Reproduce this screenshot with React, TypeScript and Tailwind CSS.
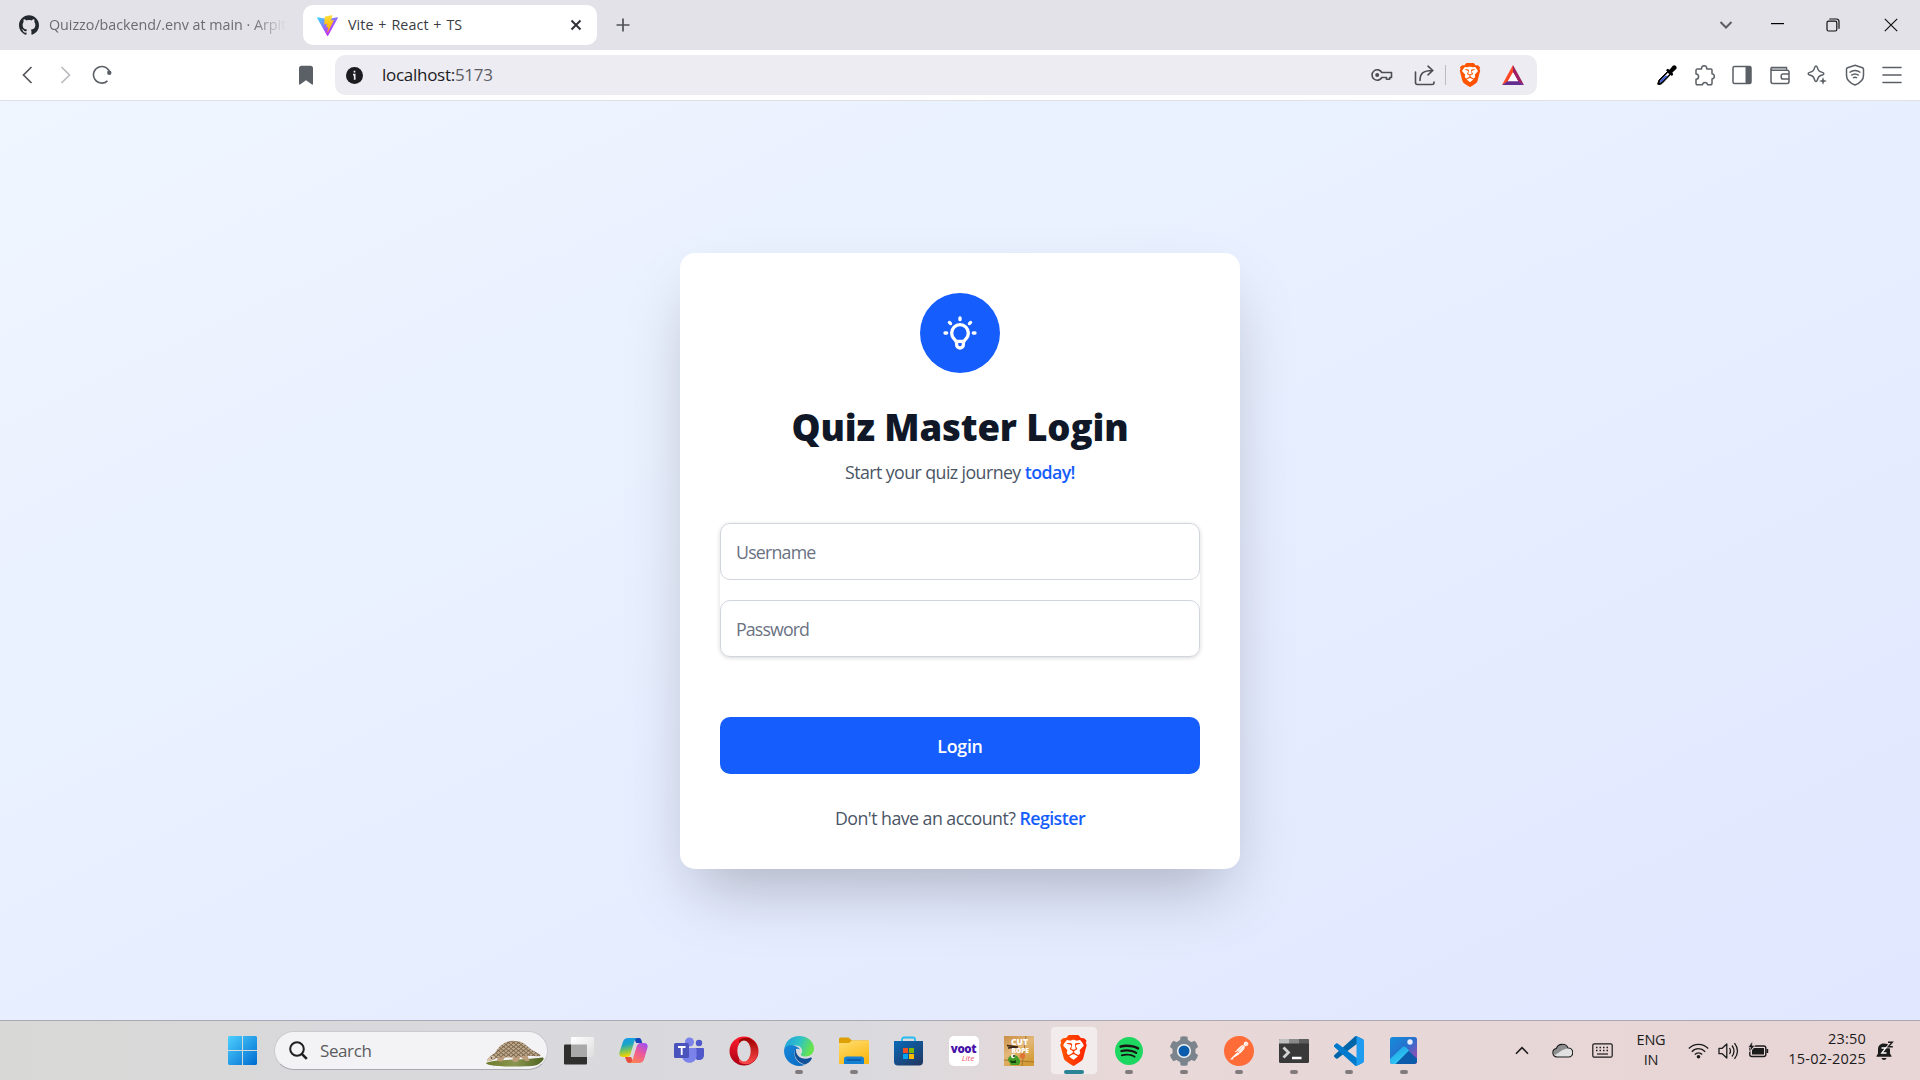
import type { ReactNode } from "react";
import { SiBrave, SiGithub, SiPostman, SiSpotify } from "react-icons/si";
import { HiOutlineLightBulb } from "react-icons/hi";

function ViteLogo() {
  return (
    <svg width="21" height="21" viewBox="0 0 256 257">
      <defs>
        <linearGradient id="va" x1="0" x2=".58" y1=".08" y2=".79"><stop offset="0" stopColor="#41D1FF" /><stop offset="1" stopColor="#BD34FE" /></linearGradient>
        <linearGradient id="vb" x1=".43" x2=".5" y1=".02" y2=".89"><stop offset="0" stopColor="#FFEA83" /><stop offset=".08" stopColor="#FFDD35" /><stop offset="1" stopColor="#FFA800" /></linearGradient>
      </defs>
      <path fill="url(#va)" d="M255.153 37.938 134.897 252.976c-2.483 4.44-8.862 4.466-11.382.048L.875 37.958c-2.746-4.814 1.371-10.646 6.827-9.67l120.385 21.517a6.54 6.54 0 0 0 2.322-.004l117.867-21.483c5.438-.991 9.574 4.796 6.877 9.62Z" />
      <path fill="url(#vb)" d="M185.432.063 96.44 17.501a3.268 3.268 0 0 0-2.634 3.014l-5.474 92.456a3.268 3.268 0 0 0 3.997 3.378l24.777-5.718c2.318-.535 4.413 1.507 3.936 3.838l-7.361 36.047c-.495 2.426 1.782 4.5 4.151 3.78l15.304-4.649c2.372-.72 4.652 1.36 4.15 3.788l-11.698 56.621c-.732 3.542 3.979 5.473 5.943 2.437l1.313-2.028 72.516-144.72c1.215-2.423-.88-5.186-3.54-4.672l-25.505 4.922c-2.396.462-4.435-1.77-3.759-4.114l16.646-57.705c.677-2.35-1.37-4.583-3.769-4.113Z" />
    </svg>
  );
}

function TabStrip() {
  return (
    <div className="flex h-[50px] shrink-0 items-center bg-[#e3e2e8] text-[14.3px]">
      <div className="ml-[19px] flex w-[284px] items-center">
        <SiGithub size={20} color="#24292f" className="shrink-0" />
        <div className="ml-[10px] w-[237px] overflow-hidden whitespace-nowrap tracking-[-0.02px] text-[#6b6c72] [mask-image:linear-gradient(to_right,black_86%,transparent)]">
          Quizzo/backend/.env at main · Arpit
        </div>
      </div>
      <div className="flex h-10 w-[294px] items-center rounded-[10px] bg-white pl-[14px] pr-[15px] text-[#3b3c43]">
        <ViteLogo />
        <span className="ml-[10px] tracking-[0.080px] [word-spacing:1px]">Vite + React + TS</span>
        <svg className="ml-auto" width="12" height="12" viewBox="0 0 12 12" stroke="#303136" strokeWidth="2"><path d="M1.5 1.5l9 9M10.5 1.5l-9 9" /></svg>
      </div>
      <svg className="ml-[19px]" width="14" height="14" viewBox="0 0 14 14" stroke="#505157" strokeWidth="1.7"><path d="M7 .5v13M.5 7h13" /></svg>
      <div className="ml-auto flex items-center pr-[22px]">
        <svg width="14" height="10" viewBox="0 0 14 10" fill="none" stroke="#5c5d64" strokeWidth="2"><path d="M1.5 2l5.5 5.500L12.500 2" /></svg>
        <svg className="ml-[38px]" width="13" height="14" viewBox="0 0 13 14" stroke="#000" strokeWidth="1.2"><path d="M0 5.600h13" /></svg>
        <svg className="ml-[42px]" width="14" height="14" viewBox="0 0 14 14" fill="none" stroke="#111" strokeWidth="1.2"><rect x="1" y="3.200" width="9.800" height="9.800" rx="1.500" /><path d="M3.300 1h7.200a2.500 2.500 0 0 1 2.500 2.500v7.200" /></svg>
        <svg className="ml-[44px]" width="14" height="14" viewBox="0 0 14 14" stroke="#111" strokeWidth="1.200"><path d="M.8.8l12.400 12.400M13.200.8L.8 13.200" /></svg>
      </div>
    </div>
  );
}

function BraveShield({ size, from, to }: { size: number; from: string; to: string }) {
  const id = `brave${size}`;
  return (
    <div className="relative grid place-items-center">
      <svg width={0} height={0} className="absolute"><defs><linearGradient id={id}><stop offset="0" stopColor={from} /><stop offset="1" stopColor={to} /></linearGradient></defs></svg>
      <svg width={size} height={size} viewBox="0 0 24 24" className="absolute"><path fill="#fff" d="M6 4h12l2 4-2.500 9L12 21l-5.500-4L4 8z" /></svg>
      <SiBrave size={size} className="relative" style={{ fill: `url(#${id})` }} />
    </div>
  );
}

function ToolSlot({ children }: { children: ReactNode }) {
  return <div className="grid w-[37.500px] place-items-center">{children}</div>;
}

function Toolbar() {
  return (
    <div className="flex h-[51px] shrink-0 items-center border-b border-[#dfdfe6] bg-white">
      <svg className="ml-[21px]" width="12" height="18" viewBox="0 0 12 18" fill="none" stroke="#57585e" strokeWidth="1.700"><path d="M10.500 1L2.500 9l8 8" /></svg>
      <svg className="ml-[27px]" width="12" height="18" viewBox="0 0 12 18" fill="none" stroke="#babbc0" strokeWidth="1.700"><path d="M1.500 1l8 8-8 8" /></svg>
      <svg className="ml-[20px]" width="21" height="20" viewBox="0 0 21 20" fill="none" stroke="#5b6067" strokeWidth="1.600"><path d="M15.500 15.800A8.300 8.300 0 1 1 18 8.500" /><circle cx="17.300" cy="7.800" r="2.200" fill="#5b6067" stroke="none" /></svg>
      <svg className="ml-[186px]" width="14" height="20" viewBox="0 0 14 20" fill="#5b6067"><path d="M0 3.200A2.500 2.500 0 0 1 2.500.7h9A2.500 2.500 0 0 1 14 3.200V19c0 .6-.6.8-1 .5l-6-4.200-6 4.200c-.4.300-1 .1-1-.5z" /></svg>
      <div className="ml-[22px] flex h-10 w-[1202px] items-center rounded-[10px] bg-[#edecf2]">
        <svg className="ml-[11px] mt-px" width="17" height="17" viewBox="0 0 17 17"><circle cx="8.500" cy="8.500" r="8.500" fill="#1b1b20" /><path d="M7 7.700h1.700v5M8.500 3.800v1.700" fill="none" stroke="#edecf2" strokeWidth="1.700" /></svg>
        <span className="ml-[19px] text-[17px] tracking-[-0.28px] text-[#1c1b22]">localhost:<span className="text-[#5c5d64]">5173</span></span>
        <svg className="ml-auto" width="22" height="14" viewBox="0 0 22 14" fill="none" stroke="#4c4d53" strokeWidth="1.600"><path d="M10.800 4.500H20.500v5h-1.800v1.700h-3.200V9.500h-4.700A5.200 5.200 0 1 1 10.800 4.500z" strokeLinejoin="round" /><circle cx="6.200" cy="7" r="2" fill="#4c4d53" stroke="none" /></svg>
        <svg className="ml-[21px]" width="22" height="21" viewBox="0 0 22 21" fill="none" stroke="#4c4d53" strokeWidth="1.600" strokeLinecap="round"><path d="M1.500 7v10.500a2 2 0 0 0 2 2h14.500a2 2 0 0 0 2-2V17M6 15.500c0-7 3-10 12.500-10M14 1.200l4.700 4.300-4.700 4.300" /></svg>
        <div className="ml-[9px] h-5 w-px bg-[#bbbbc2]" />
        <div className="ml-[12px]"><BraveShield size={24} from="#ff5601" to="#ff5000" /></div>
        <svg className="ml-[20px] mr-[13px]" width="22" height="20" viewBox="0 0 22 20"><path d="M11 0L0 20l6-3.300 5-9.200z" fill="#ff4724" /><path d="M11 0l11 20-6-3.300-5-9.200z" fill="#9e1f63" /><path d="M0 20h22l-6-4H6z" fill="#662d91" /><path d="M11 7.300l5.200 8.900H5.800z" fill="#fff" /></svg>
      </div>
      <div className="ml-auto mr-[9px] flex items-center">
        <ToolSlot><svg width="20" height="20" viewBox="0 0 20 20"><path d="M11.500 5.500L2 15l-1.300 3.800L1.500 20 5 18.500l9.500-10z" fill="#000" stroke="#000" /><path d="M10.800 7.700L3.300 15.700l-.8 2 1.800-.7 8-7.700z" fill="#fff" /><path d="M8.300 10.800l-5 5-.8 2 2-.7 6.300-6.300z" fill="#3858d6" /><path d="M9 5.200l1.500-1.500 2 1L15.800.8c2-1.800 5 1 3.400 3.300l-3.800 3.300.8 2L14.800 11z" fill="#000" /></svg></ToolSlot>
        <ToolSlot><svg width="21" height="21" viewBox="0 0 21 21" fill="none" stroke="#5b6067" strokeWidth="1.500" strokeLinejoin="round"><path d="M3.500 4h4c0-4.200 5.300-4.200 5.300 0h4a1.200 1.200 0 0 1 1.200 1.200v3.500c3.200.5 3 4.800 0 5.200V18.500a1.200 1.200 0 0 1-1.200 1.200h-3.300c-.3-3-4.700-3-5 0H3.300A1.200 1.200 0 0 1 2 18.500v-4.200c3.400-.3 3.400-5 0-5.300V5.200A1.300 1.300 0 0 1 3.500 4z" /></svg></ToolSlot>
        <ToolSlot><svg width="20" height="20" viewBox="0 0 20 20"><rect x="1" y="1.500" width="18" height="17" rx="1.500" fill="none" stroke="#5b6067" strokeWidth="1.500" /><path d="M13.500 1.500h5.500v17h-5.500z" fill="#5b6067" /></svg></ToolSlot>
        <ToolSlot><svg width="20" height="20" viewBox="0 0 20 20" fill="none" stroke="#5b6067" strokeWidth="1.500"><path d="M1 2.500h15.500v2.800M1 2.500v14a2 2 0 0 0 2 2h14a2 2 0 0 0 2-2V7a1.700 1.700 0 0 0-1.700-1.700H3A2 2 0 0 1 1 3.500M19 9h-6a1.800 1.800 0 0 0-1.800 1.800v1.400A1.800 1.800 0 0 0 13 14h6" /><path d="M2 3.800h14" stroke="#a7aaae" /></svg></ToolSlot>
        <ToolSlot><svg width="20" height="20" viewBox="0 0 20 20" fill="none" stroke="#5b6067" strokeWidth="1.500" strokeLinejoin="round"><path d="M9 1c.8 0 1 .5 1.300 1.400 1 3.300 1.700 4 5 5 2 .6 2 2 0 2.600-3.300 1-4 1.700-5 5-.6 2-2 2-2.600 0-1-3.300-1.700-4-5-5-2-.6-2-2 0-2.600 3.300-1 4-1.700 5-5C8 1.500 8.200 1 9 1z" /><path d="M16 12l1 3 3 1-3 1-1 3-1-3-3-1 3-1z" fill="#5b6067" stroke="none" /></svg></ToolSlot>
        <ToolSlot><svg width="20" height="22" viewBox="0 0 20 22" fill="none" stroke="#5b6067" strokeWidth="1.500"><path d="M10 1.200l7.500 2.600c.8.300 1 .7 1 1.500v6c0 5-4 8-8.500 9.700C5.500 19.300 1.500 16.300 1.500 11.300v-6c0-.8.200-1.200 1-1.500z" /><path d="M4.500 8.500c3.500-2.600 7.500-2.600 11 0M6.300 11.300c2.300-1.700 5.100-1.700 7.400 0M8 14c1.200-.9 2.800-.9 4 0" /></svg></ToolSlot>
        <ToolSlot><svg width="20" height="18" viewBox="0 0 20 18" stroke="#5b6067" strokeWidth="1.600" strokeLinecap="round"><path d="M1 1.500h18M1 9h18M1 16.500h18" /></svg></ToolSlot>
      </div>
    </div>
  );
}

function LoginPage() {
  return (
    <main className="flex grow items-center justify-center bg-gradient-to-br from-[#eff6ff] to-[#e0e7ff]">
      <div className="flex h-[616px] w-[560px] flex-col rounded-[15px] bg-white px-10 pt-10 text-[17.8px] text-[#4a5565] shadow-[0_31px_62px_-15px_rgba(0,0,0,0.25)]">
        <div className="grid size-20 shrink-0 place-items-center self-center rounded-full bg-[#155dfc] text-white">
          <HiOutlineLightBulb size={40} />
        </div>
        <h1 className="mt-[29px] whitespace-nowrap text-center text-[36.500px] font-extrabold leading-[50px] tracking-[-0.13px] text-[#101828]">Quiz Master Login</h1>
        <p className="mt-[5px] text-center leading-[30px] tracking-[-0.58px]">Start your quiz journey <span className="font-semibold text-[#155dfc]">today!</span></p>
        <div className="mt-[36px] flex shrink-0 flex-col gap-5 rounded-[10px] shadow-[0_1px_4px_rgba(0,0,0,0.16)]">
          <input className="h-[57px] rounded-[10px] border border-[#d1d5dc] bg-white px-[15px] pt-[2px] tracking-[-0.8px] placeholder:text-[#6a7282]" placeholder="Username" />
          <input className="h-[57px] rounded-[10px] border border-[#d1d5dc] bg-white px-[15px] pt-[2px] tracking-[-0.88px] placeholder:text-[#6a7282]" placeholder="Password" />
        </div>
        <button className="mt-[60px] h-[57px] shrink-0 rounded-[10px] bg-[#155dfc] pt-[2px] font-semibold tracking-[-0.26px] text-white">Login</button>
        <p className="mt-[29px] text-center leading-[30px] tracking-[-0.55px]">Don't have an account? <span className="font-semibold text-[#155dfc]">Register</span></p>
      </div>
    </main>
  );
}

function Pangolin() {
  return (
    <svg width="58" height="27" viewBox="0 0 58 27">
      <defs>
        <pattern id="scales" width="5" height="4" patternUnits="userSpaceOnUse"><rect width="5" height="4" fill="#a58f75" /><path d="M0 0q2.500 5 5 0M-2.500 2q2.500 5 5 0M2.500 2q2.500 5 5 0" fill="#bfa888" stroke="#6d5a45" strokeWidth=".8" /></pattern>
        <linearGradient id="grass"><stop offset="0" stopColor="#6d7c2c" /><stop offset=".5" stopColor="#8a9650" /><stop offset="1" stopColor="#4f6420" /></linearGradient>
      </defs>
      <path d="M0 23C8 19 40 20 56 17.500c4 0 0 5-5 7.500-4 2-38 2-44 .5C3 25 0 24 0 23z" fill="url(#grass)" />
      <path d="M12 15l-1 6 5 .500 3-4 8 0-.5 4 5 .5 3-5 5 4h4l-3-8z" fill="#bd9d7b" />
      <path d="M1 21c1-4 5-6 8-8C14 4 22 0 29 1c8 0 12 5 17 9 3 2 7 3 9 6-6 1-12-1-18 0-5 2-9 1-13 1-6 0-9 0-13 1-3 2-7 3-10 3z" fill="url(#scales)" />
      <path d="M1 21.500c0-3 3-5 6-6l2 2c-2 2-5 4-8 4z" fill="#d7c4a9" /><circle cx="5.500" cy="18" r=".8" fill="#222" />
    </svg>
  );
}

function AppSlot({ children, running = false, active = false }: { children: ReactNode; running?: boolean; active?: boolean }) {
  return (
    <div className="relative grid h-[59px] w-[55px] shrink-0 place-items-center">
      {active && <div className="absolute left-[3.500px] top-[5px] h-[49px] w-12 rounded-[5px] border border-[#e6dcdc] bg-[#f2ecec]" />}
      <div className="relative">{children}</div>
      {active && <div className="absolute bottom-[6px] h-1 w-5 rounded-full bg-[#2a8496]" />}
      {running && <div className="absolute bottom-[6px] h-1 w-2 rounded-full bg-[#827b7d]" />}
    </div>
  );
}

function TaskbarApps() {
  return (
    <>
      <AppSlot><svg width="30" height="30" viewBox="0 0 30 30"><defs><linearGradient id="tw" y2="1"><stop stopColor="#fff" /><stop offset="1" stopColor="#dedede" /></linearGradient></defs><rect y="8.500" width="23" height="20" rx="1" fill="#2f2f2d" /><rect x="7" y="1" width="23" height="20" rx="1" fill="url(#tw)" /><path d="M7 8.500h16V21H7z" fill="#a9a9a9" /></svg></AppSlot>
      <AppSlot>
        <svg width="29" height="27" viewBox="0 0 29 27">
          <defs>
            <linearGradient id="c1" x2=".2" y2="1"><stop stopColor="#1499f0" /><stop offset=".4" stopColor="#1ca6c4" /><stop offset=".7" stopColor="#7cc45a" /><stop offset="1" stopColor="#f4d500" /></linearGradient>
            <linearGradient id="c2" x1=".8" x2=".2" y2="1"><stop stopColor="#a44df0" /><stop offset=".45" stopColor="#ec5997" /><stop offset="1" stopColor="#ff8650" /></linearGradient>
          </defs>
          <path d="M15 1h5c2 0 2.500 2 3.200 5h-6z" fill="#1645b8" />
          <path d="M6 20h6l3 6H10c-2 0-3-3-4-6z" fill="#e64f3d" />
          <path d="M9.500 1H19c-2 0-3 1.500-3.700 3.500L11.500 17c-.7 2.300-2 3-4 3H4c-3 0-4.300-2-3.400-5L4 4.500C5 2 6.500 1 9.500 1z" fill="url(#c1)" />
          <path d="M19.500 26H10c2 0 3-1.500 3.700-3.500L17.500 10c.7-2.300 2-4 4-4H25c3 0 4.300 2 3.400 5L25 22.500c-1 2.500-2.500 3.500-5.500 3.500z" fill="url(#c2)" />
        </svg>
      </AppSlot>
      <AppSlot>
        <svg width="30" height="27" viewBox="0 0 30 27"><circle cx="15.500" cy="5" r="4.500" fill="#7b83eb" /><circle cx="25" cy="6" r="3.200" fill="#5059c9" /><path d="M20 11h9a1 1 0 0 1 1 1v6c0 3-2 5-5 5s-5-2-5-5z" fill="#5059c9" /><path d="M10 11h11a1.500 1.500 0 0 1 1.500 1.500V19c0 9-14 9-14.500 0z" fill="#7b83eb" /><rect y="6" width="15" height="15" rx="1.500" fill="#4b53bc" /><path d="M4 10h7.500M7.700 10v8" stroke="#fff" strokeWidth="1.800" /></svg>
      </AppSlot>
      <AppSlot>
        <svg width="30" height="30" viewBox="0 0 30 30"><defs><linearGradient id="o1" y2="1" x2="0"><stop stopColor="#ff1b2d" /><stop offset="1" stopColor="#a70014" /></linearGradient><linearGradient id="o2" y2="1" x2="0"><stop stopColor="#9c0000" /><stop offset="1" stopColor="#ff4b4b" /></linearGradient></defs><circle cx="15" cy="15" r="14.500" fill="url(#o1)" /><path d="M10 4c9-6 19 1 19 11S19 32 10 26z" fill="url(#o2)" /><ellipse cx="15" cy="15" rx="6.700" ry="10.500" fill="#dadade" /></svg>
      </AppSlot>
      <AppSlot running>
        <svg width="30" height="30" viewBox="0 0 30 30">
          <defs><linearGradient id="e1" x1="0" x2="1" y2=".3"><stop stopColor="#1d9de2" /><stop offset=".55" stopColor="#2fc2c6" /><stop offset="1" stopColor="#66e34d" /></linearGradient><linearGradient id="e2" x2="1" y2="1"><stop stopColor="#1687d9" /><stop offset="1" stopColor="#0b69c2" /></linearGradient></defs>
          <path d="M.2 13C1.500 5 7.500 0 15 0c9 0 15 6 15 12.500 0 5-4 8-8.500 8-4 0-5-1.500-4.500-2.500 3-3.500 0-8.500-5-8.500C7 9.500 2 10.500.2 13z" fill="url(#e1)" />
          <path d="M.1 14C.8 10 6 8.500 10.500 9.800c2.500.7 4.500 2 5.500 3.700-4-2-6 1-5.500 5C11 24 16 28.500 21 28.700 11 33-.8 25 .1 14z" fill="url(#e2)" />
          <path d="M12 12.500c-4 6 1 14 9 16 3-1 5-3 6.500-5.300 1-1.500-.5-2-1.500-1.500-7 3-15-1-14-9.200z" fill="#11529a" />
        </svg>
      </AppSlot>
      <AppSlot running>
        <svg width="30" height="28" viewBox="0 0 30 28"><defs><linearGradient id="f1" y2="1" x2=".5"><stop stopColor="#ffdf72" /><stop offset="1" stopColor="#fbb916" /></linearGradient></defs><path d="M0 2A1.500 1.500 0 0 1 1.500.500h8L13 3.500h15.500A1.500 1.500 0 0 1 30 5v3H0z" fill="#dda006" /><path d="M0 6h10l3-2.500h17V27H0z" fill="url(#f1)" /><path d="M5 27v-5a2.500 2.500 0 0 1 2.500-2.500h15A2.500 2.500 0 0 1 25 22v5z" fill="#1380d4" /><path d="M8 23h14" stroke="#0c559c" strokeWidth="1.500" /></svg>
      </AppSlot>
      <AppSlot>
        <svg width="29" height="30" viewBox="0 0 29 30"><defs><linearGradient id="s1" y2="1" x2=".8"><stop stopColor="#0869b9" /><stop offset="1" stopColor="#203a66" /></linearGradient></defs><path d="M8 6V3.500A2 2 0 0 1 10 1.500h9a2 2 0 0 1 2 2V6" fill="none" stroke="#22bcf2" strokeWidth="1.800" /><path d="M0 5h29v20.500a4 4 0 0 1-4 4H4a4 4 0 0 1-4-4z" fill="url(#s1)" /><path d="M9 12h5v5H9z" fill="#f25022" /><path d="M15 12h5v5h-5z" fill="#7fba00" /><path d="M9 18h5v5H9z" fill="#00a4ef" /><path d="M15 18h5v5h-5z" fill="#ffb900" /></svg>
      </AppSlot>
      <AppSlot>
        <div className="flex h-[30px] w-[30px] flex-col rounded-[5px] bg-white pt-[6px] text-center">
          <span className="text-[11.500px] font-extrabold leading-[13px] tracking-[-0.400px] text-[#4611a8]">voot</span>
          <span className="-mt-px pl-[9px] text-[8px] italic leading-[8px] text-[#f0506e]">Lite</span>
        </div>
      </AppSlot>
      <AppSlot>
        <svg width="30" height="30" viewBox="0 0 30 30"><defs><linearGradient id="r1" y2="1" x2=".6"><stop stopColor="#c98d45" /><stop offset=".5" stopColor="#e3b878" /><stop offset="1" stopColor="#d49c37" /></linearGradient></defs><rect width="30" height="30" fill="url(#r1)" /><path d="M0 24l30 2M22 0l-4 30M3 9l8 3" stroke="#a8742f" strokeWidth="1" /><path d="M3 9.500l11 1.500-10 1" stroke="#3a2516" strokeWidth="1.500" fill="none" /><g fontFamily="Open Sans" fontWeight="800" fill="#fff"><text x="7" y="8.500" fontSize="9" textLength="17" lengthAdjust="spacingAndGlyphs">CUT</text><text x="7.500" y="16.500" fontSize="7" textLength="17.500" lengthAdjust="spacingAndGlyphs">ROPE</text></g><path d="M4 23c1-4 6-5 9-3 3 3 4 6 2 9H6c2-2-2-2-2-6z" fill="#449d28" /><circle cx="9" cy="20" r="2.200" fill="#eaf2d8" /><circle cx="10" cy="20" r="1" fill="#222" /><path d="M6 24q3 2 6 0v3H7z" fill="#17400f" /><circle cx="18.500" cy="20" r="2.700" fill="#df7434" /></svg>
      </AppSlot>
      <AppSlot active><BraveShield size={31} from="#ff5500" to="#ff2200" /></AppSlot>
      <AppSlot running><div className="grid size-[28px] place-items-center rounded-full bg-[radial-gradient(#191414_60%,transparent_62%)]"><SiSpotify size={28} color="#1ed760" /></div></AppSlot>
      <AppSlot running>
        <svg width="30" height="30" viewBox="0 0 30 30"><g fill="#7b848c"><circle cx="15" cy="15" r="11.500" /><path d="M11 5L11.500.8Q15-.500 18.500.8L19 5v20l-.5 4.200q-3.500 1.300-7 0L11 25z" /><path transform="rotate(60 15 15)" d="M11 5L11.500.8Q15-.500 18.500.8L19 5v20l-.5 4.200q-3.500 1.300-7 0L11 25z" /><path transform="rotate(120 15 15)" d="M11 5L11.500.8Q15-.500 18.500.8L19 5v20l-.5 4.200q-3.500 1.300-7 0L11 25z" /></g><circle cx="15" cy="15" r="6.300" fill="#0b5cad" stroke="#eef1f3" strokeWidth="1.600" /></svg>
      </AppSlot>
      <AppSlot running><div className="rounded-full bg-[radial-gradient(white_60%,transparent_62%)]"><SiPostman size={30} color="#ff6c37" /></div></AppSlot>
      <AppSlot running>
        <svg width="30" height="24" viewBox="0 0 30 24"><rect width="30" height="24" rx="1.500" fill="#393939" /><path d="M1 0h9v4.500H0V1z" fill="#bdbdbd" /><path d="M10 0h10v4.500H10z" fill="#8a8a8a" /><path d="M20 0h9l1 1v3.500H20z" fill="#5d5d5d" /><path d="M4.500 8.500L9.500 13.500l-5 5" fill="none" stroke="#d2d2d2" strokeWidth="2.800" /><path d="M13 19h9.500" stroke="#fff" strokeWidth="2.500" /></svg>
      </AppSlot>
      <AppSlot running>
        <svg width="30" height="30" viewBox="0 0 100 100"><path d="M96.500 10.800L75.900.9a6.200 6.200 0 0 0-7.100 1.200L1.300 63.600a4.200 4.200 0 0 0 0 6.100l5.500 5a4.200 4.200 0 0 0 5.300.3L93.400 13.400c2.700-2.100 6.600-.1 6.600 3.300v-.3a6.300 6.300 0 0 0-3.500-5.600z" fill="#0065a9" /><path d="M96.500 89.200l-20.600 9.900a6.200 6.200 0 0 1-7.100-1.200L1.300 36.400a4.200 4.200 0 0 1 0-6.100l5.500-5a4.200 4.200 0 0 1 5.300-.3l81.300 61.600c2.700 2.100 6.600.1 6.600-3.300v.3a6.300 6.300 0 0 1-3.500 5.600z" fill="#007acc" /><path d="M75.900 99.100a6.200 6.200 0 0 1-7.100-1.200c2.300 2.300 6.200.7 6.200-2.600V4.700c0-3.300-3.900-4.900-6.200-2.600A6.200 6.200 0 0 1 75.900.9l20.600 9.900a6.300 6.300 0 0 1 3.500 5.600v67.200a6.300 6.300 0 0 1-3.500 5.600z" fill="#1f9cf0" /></svg>
      </AppSlot>
      <AppSlot running>
        <svg width="27" height="27" viewBox="0 0 27 27"><defs><linearGradient id="p1" x2=".8" y2=".8"><stop stopColor="#168ed8" /><stop offset=".6" stopColor="#2670ce" /><stop offset="1" stopColor="#8851b8" /></linearGradient><linearGradient id="p2" y2="1" x2=".6"><stop stopColor="#1a99e0" /><stop offset="1" stopColor="#35d0f8" /></linearGradient></defs><rect width="27" height="27" rx="2.500" fill="url(#p1)" /><path d="M14 15l4-1.500L27 21.500V24a3 3 0 0 1-3 3H5z" fill="#0d5cab" /><path d="M0 22L12 10.500c1.500-1.400 3-1.200 4.500.3L19 13.500 5.500 27H3a3 3 0 0 1-3-3z" fill="url(#p2)" /><circle cx="20" cy="5" r="2.700" fill="#e8ecff" /></svg>
      </AppSlot>
    </>
  );
}

function Tray() {
  return (
    <div className="ml-auto flex items-center pr-[26px] text-[#1b1b1b]">
      <svg width="14" height="9" viewBox="0 0 14 9" fill="none" stroke="#1b1b1b" strokeWidth="1.600"><path d="M1 7.700l6-6 6 6" /></svg>
      <svg className="ml-[23px]" width="21" height="15" viewBox="0 0 21 15"><path d="M5 14a4.300 4.300 0 0 1-.7-8.500A6.300 6.300 0 0 1 16 5a4.500 4.500 0 0 1 .5 9z" fill="#e1e1e1" /><path d="M2 7.500c1-1.500 2-1.700 2.800-1.800C6 1 13 0 15.500 5.300L10.500 7 3 12C1.500 11 1.200 9 2 7.500z" fill="#8e8e8e" /><path d="M5 14a4.300 4.300 0 0 1-.7-8.500A6.300 6.300 0 0 1 16 5a4.500 4.500 0 0 1 .5 9z" fill="none" stroke="#1b1b1b" strokeWidth="1.200" /></svg>
      <svg className="ml-[19px]" width="21" height="15" viewBox="0 0 21 15" fill="none" stroke="#1b1b1b" strokeWidth="1.200"><rect x=".8" y=".8" width="19.400" height="13.400" rx="1.500" /><path d="M4 4.500h14M4 7.500h14" strokeDasharray="1.500 2" strokeWidth="1.500" /><path d="M5 11h11" /></svg>
      <div className="-mt-px ml-[19px] w-[38px] text-center text-[14.500px] leading-5 tracking-[-0.200px]">ENG<br />IN</div>
      <svg className="ml-[18px]" width="21" height="16" viewBox="0 0 21 16" fill="none" stroke="#1b1b1b" strokeWidth="1.300"><path d="M.8 5.500c5.500-5.600 13.900-5.600 19.400 0M3.800 8.700c3.800-4 9.600-4 13.400 0M6.800 11.500c2.100-2.300 5.300-2.300 7.400 0" /><circle cx="10.500" cy="13.700" r="1.800" fill="#1b1b1b" stroke="none" /></svg>
      <svg className="ml-[9px]" width="21" height="18" viewBox="0 0 21 18" fill="none" stroke="#1b1b1b" strokeWidth="1.300" strokeLinejoin="round"><path d="M1 6.300h3.200L8.800 2v14l-4.600-4.300H1z" /><path d="M11.500 6q2 3 0 6M14 3.500q4 5.500 0 11M16.500 1.200q6 7.800 0 15.600" /></svg>
      <svg className="ml-[9px] -mt-[3px]" width="21" height="17" viewBox="0 0 21 17"><rect x="1.800" y="5" width="16" height="10.500" rx="2" fill="none" stroke="#1b1b1b" strokeWidth="1.400" /><path d="M6 7h10v6.500H4V9zM18.500 8h1.700v4h-1.700z" fill="#1b1b1b" /><path d="M4.500 0L0 6.500h2.500L1.500 11 7 4.500H4.200z" fill="#1b1b1b" stroke="#e8d5d6" strokeWidth=".7" /></svg>
      <div className="-mt-[3px] ml-[15px] w-[82px] text-right text-[14.500px] leading-5 tracking-[0.200px]">23:50<br />15-02-2025</div>
      <svg className="ml-[10px]" width="18" height="20" viewBox="0 0 18 20"><path d="M8 2.500c-4 0-6 2.500-6 6v4L.500 15v.7h15V15L14 12.500V8l-2.500-5z" fill="#1b1b1b" /><path d="M5.500 17h5c-.5 2.500-4.500 2.500-5 0z" fill="#1b1b1b" /><path d="M12 1.200h4.300l-4 4.500h4.500" fill="none" stroke="#e8d5d6" strokeWidth="3.200" /><path d="M5.500 7h4.300l-4 5h4.700" fill="none" stroke="#fff" strokeWidth="1.300" /><path d="M12 1.200h4.300l-4 4.500h4.500" fill="none" stroke="#1b1b1b" strokeWidth="1.400" /></svg>
    </div>
  );
}

function Taskbar() {
  return (
    <div className="flex h-[60px] shrink-0 items-center border-t border-[#aaa9b3] bg-[linear-gradient(to_right,#d8d8d6_0%,#d9d9dc_20%,#dadade_45%,#e8d8d8_58%,#e8d5d6_100%)]">
      <svg className="ml-[228px] shrink-0" width="29" height="29" viewBox="0 0 29 29"><defs><linearGradient id="w1" x2="1" y2="1" gradientUnits="userSpaceOnUse" gradientTransform="scale(29)"><stop stopColor="#4cd0ff" /><stop offset="1" stopColor="#006cd0" /></linearGradient></defs><path d="M1 0h13v14H0V1zM15 0h13l1 1v13H15zM0 15h14v14H1l-1-1zM15 15h14v13l-1 1H15z" fill="url(#w1)" /></svg>
      <div className="ml-[17px] flex h-[39px] w-[274px] shrink-0 items-center rounded-full border border-b-[#aaa9b0] border-[#cbcbcf] bg-[#f3f3f5] pl-[14px] pr-[3px]">
        <svg width="19" height="19" viewBox="0 0 19 19" fill="none" stroke="#1f1f1f" strokeWidth="2"><circle cx="8" cy="8" r="6.800" /><path d="M12.800 12.800l5 5" strokeWidth="2.600" /></svg>
        <span className="ml-[12px] text-[17px] tracking-[-0.400px] text-[#5b5b5d]">Search</span>
        <div className="ml-auto mt-[6px]"><Pangolin /></div>
      </div>
      <div className="ml-[3px] flex"><TaskbarApps /></div>
      <Tray />
    </div>
  );
}

export default function App() {
  return (
    <div className="flex h-[1080px] w-[1920px] flex-col overflow-hidden bg-white font-['Open_Sans','Noto_Sans',sans-serif]">
      <TabStrip />
      <Toolbar />
      <LoginPage />
      <Taskbar />
    </div>
  );
}
